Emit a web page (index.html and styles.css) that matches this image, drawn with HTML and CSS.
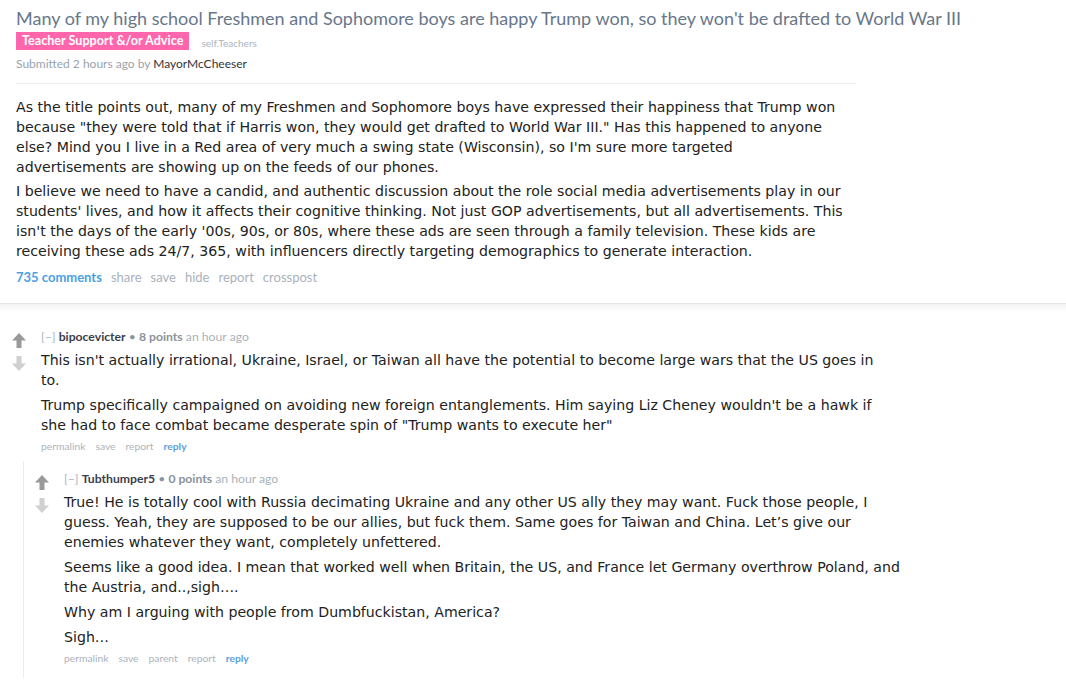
FILE: index.html
```html
<!DOCTYPE html>
<html>
<head>
<meta charset="utf-8">
<link rel="stylesheet" href="styles.css">
</head>
<body>
<div class="post">
  <h1 class="title">Many of my high school Freshmen and Sophomore boys are happy Trump won, so they won't be drafted to World War III</h1>
  <div class="flair-row"><span class="flair">Teacher Support &amp;/or Advice</span><span class="domain">self.Teachers</span></div>
  <div class="submitted">Submitted 2 hours ago by <span class="author">MayorMcCheeser</span></div>
  <div class="rule"></div>
  <div class="md post-md">
    <p>As the title points out, many of my Freshmen and Sophomore boys have expressed their happiness that Trump won because "they were told that if Harris won, they would get drafted to World War III." Has this happened to anyone else? Mind you I live in a Red area of very much a swing state (Wisconsin), so I'm sure more targeted advertisements are showing up on the feeds of our phones.</p>
    <p>I believe we need to have a candid, and authentic discussion about the role social media advertisements play in our students' lives, and how it affects their cognitive thinking. Not just GOP advertisements, but all advertisements. This isn't the days of the early '00s, 90s, or 80s, where these ads are seen through a family television. These kids are receiving these ads 24/7, 365, with influencers directly targeting demographics to generate interaction.</p>
  </div>
  <ul class="post-buttons">
    <li class="comments-link">735 comments</li>
    <li>share</li>
    <li>save</li>
    <li>hide</li>
    <li>report</li>
    <li>crosspost</li>
  </ul>
</div>
<div class="sep"></div>
<div class="commentarea">
  <div class="comment">
    <div class="votes">
      <svg class="arrow up" width="14" height="15" viewBox="0 0 14 15"><path d="M7 0 L14 7.5 L9.5 7.5 L9.5 15 L4.5 15 L4.5 7.5 L0 7.5 Z"/></svg>
      <svg class="arrow down" width="14" height="15" viewBox="0 0 14 15"><path d="M7 15 L14 7.5 L9.5 7.5 L9.5 0 L4.5 0 L4.5 7.5 L0 7.5 Z"/></svg>
    </div>
    <div class="entry">
      <div class="tagline"><span class="expand">[–]</span> <span class="user">bipocevicter</span> <span class="dot">•</span> <span class="score">8 points</span> <span class="time">an hour ago</span></div>
      <div class="md comment-md">
        <p>This isn't actually irrational, Ukraine, Israel, or Taiwan all have the potential to become large wars that the US goes in to.</p>
        <p>Trump specifically campaigned on avoiding new foreign entanglements. Him saying Liz Cheney wouldn't be a hawk if she had to face combat became desperate spin of "Trump wants to execute her"</p>
      </div>
      <ul class="flat-list">
        <li>permalink</li>
        <li>save</li>
        <li>report</li>
        <li class="reply">reply</li>
      </ul>
    </div>
  </div>
  <div class="child">
    <div class="comment">
      <div class="votes">
        <svg class="arrow up" width="14" height="15" viewBox="0 0 14 15"><path d="M7 0 L14 7.5 L9.5 7.5 L9.5 15 L4.5 15 L4.5 7.5 L0 7.5 Z"/></svg>
        <svg class="arrow down" width="14" height="15" viewBox="0 0 14 15"><path d="M7 15 L14 7.5 L9.5 7.5 L9.5 0 L4.5 0 L4.5 7.5 L0 7.5 Z"/></svg>
      </div>
      <div class="entry">
        <div class="tagline"><span class="expand">[–]</span> <span class="user">Tubthumper5</span> <span class="dot">•</span> <span class="score">0 points</span> <span class="time">an hour ago</span></div>
        <div class="md comment-md">
          <p>True! He is totally cool with Russia decimating Ukraine and any other US ally they may want. Fuck those people, I guess. Yeah, they are supposed to be our allies, but fuck them. Same goes for Taiwan and China. Let’s give our enemies whatever they want, completely unfettered.</p>
          <p>Seems like a good idea. I mean that worked well when Britain, the US, and France let Germany overthrow Poland, and the Austria, and..,sigh….</p>
          <p>Why am I arguing with people from Dumbfuckistan, America?</p>
          <p>Sigh…</p>
        </div>
        <ul class="flat-list">
          <li>permalink</li>
          <li>save</li>
          <li>parent</li>
          <li>report</li>
          <li class="reply">reply</li>
        </ul>
      </div>
    </div>
  </div>
</div>
</body>
</html>
```

FILE: styles.css
```css
html, body {
  margin: 0;
  padding: 0;
  background: #fff;
}
body {
  font-family: Lato, "Open Sans", sans-serif;
  overflow: hidden;
}
.post {
  padding: 6px 16px 0 16px;
}
.title {
  margin: 0;
  font-family: Lato, sans-serif;
  font-weight: 400;
  font-size: 18px;
  line-height: 24px;
  color: #68778a;
}
.flair-row {
  display: flex;
  align-items: flex-end;
  height: 20px;
}
.flair {
  background: #ff66ab;
  color: #fff;
  font-weight: 700;
  font-size: 12.6px;
  line-height: 18px;
  padding: 0 6px;
  margin-top: 2px;
  align-self: flex-start;
}
.domain {
  font-size: 10px;
  color: #aab4bf;
  margin-left: 12px;
  line-height: 14px;
}
.submitted {
  font-size: 12px;
  line-height: 16px;
  color: #9aa3ac;
  margin-top: 6px;
}
.author {
  color: #33343a;
}
.rule {
  width: 840px;
  height: 1px;
  background: #ececec;
  margin-top: 11px;
}
.md {
  font-family: "DejaVu Sans", Verdana, sans-serif;
  font-size: 14.15px;
  line-height: 20px;
  color: #222;
  max-width: 842px;
}
.md p {
  margin: 0;
}
.post-md {
  margin-top: 13px;
  max-width: 829px;
}
.post-md p + p {
  margin-top: 4px;
}
.comment-md p + p {
  margin-top: 5px;
}
.post-buttons {
  list-style: none;
  margin: 7px 0 0 0;
  padding: 0;
  display: flex;
  gap: 9px;
  font-size: 13px;
  line-height: 18px;
  color: #a9b2bb;
}
.post-buttons .comments-link {
  color: #4a9fe6;
  font-weight: 700;
}
.sep {
  margin-top: 17px;
  height: 8px;
  border-top: 1px solid #e6e6e6;
  background: linear-gradient(#f2f2f2, #fff);
}
.commentarea {
  padding: 17px 0 0 12px;
}
.comment {
  display: flex;
}
.votes {
  width: 29px;
  flex: none;
  display: flex;
  flex-direction: column;
  padding-top: 4px;
  gap: 8px;
}
.arrow.up { fill: #9a9a9a; }
.arrow.down { fill: #d0d0d0; }
.entry {
  flex: 1;
}
.tagline {
  font-size: 12.2px;
  line-height: 16px;
  color: #aab2ba;
}
.tagline .user {
  color: #3a3f4a;
  font-weight: 700;
}
.tagline .dot {
  color: #8a949e;
}
.tagline .score {
  color: #8a929a;
  font-weight: 700;
}
.comment-md {
  margin-top: 5px;
}
.flat-list {
  list-style: none;
  margin: 3px 0 0 0;
  padding: 0;
  display: flex;
  gap: 10px;
  font-size: 10.3px;
  line-height: 16px;
  color: #adb3bc;
}
.flat-list .reply {
  color: #5d9ee0;
  font-weight: 700;
}
.child {
  margin: 7px 0 0 11px;
  border-left: 1px solid #ececec;
  padding: 10px 0 12px 11px;
}
.child .flat-list {
  margin-top: 3px;
}
```
